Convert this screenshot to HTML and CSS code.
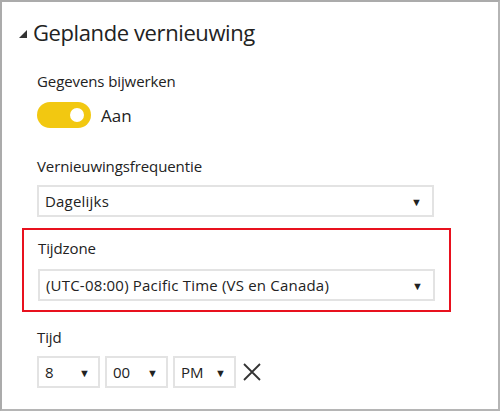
FILE: index.html
```html
<!DOCTYPE html>
<html lang="nl">
<head>
<meta charset="utf-8">
<link rel="stylesheet" href="styles.css">
</head>
<body>
<div class="frame">
  <div class="heading">
    <span class="caret"></span>
    <h1 class="title">Geplande vernieuwing</h1>
  </div>

  <div class="field field-first">
    <div class="label">Gegevens bijwerken</div>
    <div class="toggle-row">
      <span class="toggle"><span class="knob"></span></span>
      <span class="toggle-text">Aan</span>
    </div>
  </div>

  <div class="field field-freq">
    <div class="label">Vernieuwingsfrequentie</div>
    <div class="select wide"><span class="value">Dagelijks</span><span class="arrow">▼</span></div>
  </div>

  <div class="highlight">
    <div class="label">Tijdzone</div>
    <div class="select wide"><span class="value">(UTC-08:00) Pacific Time (VS en Canada)</span><span class="arrow">▼</span></div>
  </div>

  <div class="field field-time">
    <div class="label">Tijd</div>
    <div class="time-row">
      <div class="select small"><span class="value">8</span><span class="arrow">▼</span></div>
      <div class="select small"><span class="value">00</span><span class="arrow">▼</span></div>
      <div class="select small"><span class="value">PM</span><span class="arrow">▼</span></div>
      <svg class="close" width="18" height="18" viewBox="0 0 18 18"><path d="M1 1 L17 17 M17 1 L1 17" stroke="#333" stroke-width="1.8" fill="none"/></svg>
    </div>
  </div>
</div>
</body>
</html>
```
FILE: styles.css
```css
* { box-sizing: border-box; }
html, body { margin: 0; padding: 0; background: #fff; }
body {
  font-family: "Open Sans", "Noto Sans", sans-serif;
  color: #222;
}
.frame {
  width: 500px;
  height: 411px;
  border: 2px solid #ababab;
  border-right-color: #b5b5b5;
  border-bottom-color: #b5b5b5;
  padding: 0 0 0 20px;
}
.heading {
  display: flex;
  align-items: center;
  height: 58px;
  padding-top: 2px;
}
.caret {
  width: 0; height: 0;
  border-left: 8px solid transparent;
  border-bottom: 8px solid #333;
  margin: 4px 6px 0 -3px;
}
.title {
  margin: 0;
  font-weight: normal;
  font-size: 22px;
  letter-spacing: -0.4px;
  color: #222;
}
.label {
  font-size: 15px;
  letter-spacing: -0.1px;
  line-height: 20px;
  color: #222;
}
.field-first { padding: 11px 0 0 15px; }
.toggle-row {
  display: flex;
  align-items: center;
  margin-top: 11px;
  gap: 10px;
}
.toggle {
  width: 54px; height: 26px;
  border-radius: 13px;
  background: #f2c811;
  display: flex;
  align-items: center;
  justify-content: flex-end;
  padding-right: 7px;
}
.knob { width: 14px; height: 14px; border-radius: 50%; background: #fff; }
.toggle-text { font-size: 17px; color: #222; }
.field-freq { padding: 28px 0 0 15px; }
.select {
  display: flex;
  align-items: center;
  justify-content: space-between;
  height: 32px;
  border: 2px solid #e3e3e3;
  background: #fff;
  font-size: 15px;
  letter-spacing: 0.2px;
  color: #222;
  padding: 0 10px 0 6px;
}
.select.wide { width: 397px; margin-top: 9px; }
.arrow { font-size: 11px; color: #222; letter-spacing: 0; }
.highlight {
  margin: 11px 0 0 0;
  width: 429px;
  height: 84px;
  border: 2px solid #e8111e;
  padding: 8px 0 0 14px;
}
.highlight .select.wide { margin-top: 11px; }
.field-time { padding: 15px 0 0 15px; }
.time-row {
  display: flex;
  align-items: center;
  gap: 5px;
  margin-top: 9px;
}
.select.small { width: 63px; padding: 0 8px 0 6px; letter-spacing: 0; }
.close { margin-left: 2px; }
```
